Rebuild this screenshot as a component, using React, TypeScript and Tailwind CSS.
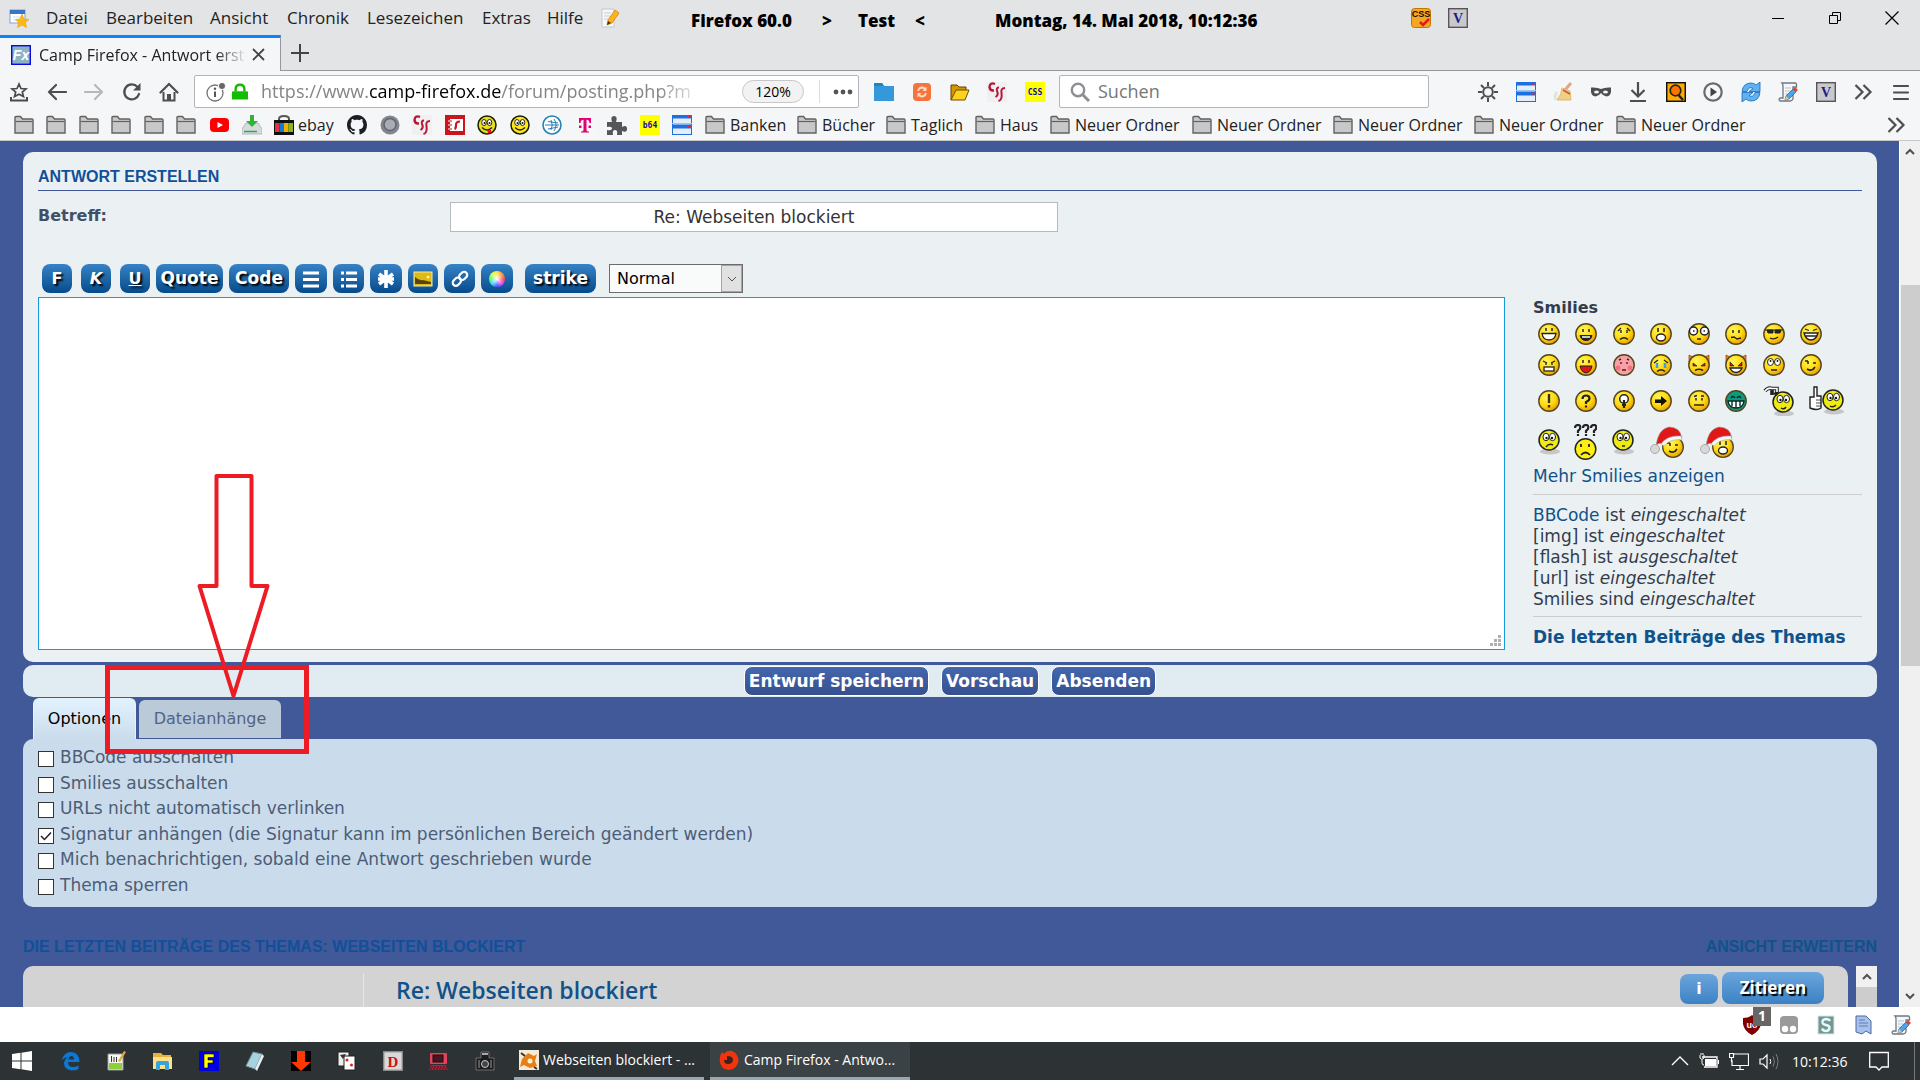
import React, { useState } from 'react'
import clsx from 'clsx'

const ui = "font-['Open_Sans','Noto_Sans',sans-serif]"
const verdana = "font-['DejaVu_Sans',sans-serif]"
const arial = "font-['Liberation_Sans',sans-serif]"

type IconProps = { className?: string }

const Svg = ({ className = 'size-5', box = 20, children }: { className?: string; box?: number; children: React.ReactNode }) => (
  <svg viewBox={`0 0 ${box} ${box}`} className={clsx('shrink-0', className)} fill="none" aria-hidden="true">
    {children}
  </svg>
)

/* ---------- browser icons ---------- */

const FolderIcon = () => (
  <Svg>
    <path d="M1 18V2.500Q1 1.500 2 1.500H6.500L8.500 4H18Q19 4 19 5V18Z" fill="#c8c8c8" stroke="#626262" strokeWidth="1.400" />
    <path d="M1.500 6.500H18.500" stroke="#626262" strokeWidth="1.200" />
  </Svg>
)

const WindowStarIcon = () => (
  <Svg>
    <rect x="1" y="2" width="15" height="13" fill="#fff" stroke="#7ba3d8" />
    <rect x="1" y="2" width="15" height="4" fill="#3b73c8" />
    <path d="M4 9H13M4 12H11" stroke="#cfe0f5" />
    <path d="M13 6L15 11L20 11.500L16.300 14.500L17.500 19.500L13 17L8.500 19.500L9.700 14.500L6.500 11.500L11 11Z" fill="#fdb913" stroke="#f0a000" strokeWidth=".6" />
  </Svg>
)

const NotePencilIcon = () => (
  <Svg>
    <path d="M2 1H14V19H2Z" fill="#f6f8fb" stroke="#c0c7d0" />
    <path d="M4 5H11M4 8H10M4 11H8" stroke="#c3ccd8" />
    <path d="M7 17L8 12L15 2L19 5L12 15Z" fill="#ffb31a" stroke="#d68500" strokeWidth=".8" />
    <path d="M7 17L8 13L11 15Z" fill="#333" />
  </Svg>
)

const ScriptIcon = () => (
  <Svg>
    <path d="M4 1H17Q19 1 18.500 5H15V17Q14 19 12 19H2Q0 17 2 16H5V4Q5 2 4 1Z" fill="#f4f7fa" stroke="#6d7884" strokeWidth="1.300" />
    <path d="M7 6H13M7 9H13M7 12H11" stroke="#b7c2cd" />
    <path d="M7 18L8 14L15 7L18 10L11 17Z" fill="#4ba3ee" stroke="#1c5fa8" strokeWidth=".7" />
    <path d="M15 7L17 5L20 8L18 10Z" fill="#e8402a" />
    <path d="M7 18L8 14L11 17Z" fill="#f7c56f" />
  </Svg>
)

const VIcon = () => (
  <Svg>
    <rect x=".7" y=".7" width="18.600" height="18.600" fill="#c9c9cd" stroke="#55555b" strokeWidth="1.400" />
    <text x="10" y="15" textAnchor="middle" fontSize="14" fontWeight="700" fontFamily="Liberation Serif, serif" fill="#1b1b86">V</text>
  </Svg>
)

const CssCheckIcon = () => (
  <Svg>
    <rect x=".5" y=".5" width="19" height="19" rx="3" fill="#f5a623" stroke="#c47400" />
    <text x="10" y="9" textAnchor="middle" fontSize="9" fontWeight="700" fontFamily="Liberation Sans, sans-serif" fill="#111">CSS</text>
    <path d="M9 14L12 17L18 11" stroke="#e01b1b" strokeWidth="2.500" />
  </Svg>
)

const WindowsListIcon = () => (
  <Svg>
    <rect x=".5" y=".5" width="19" height="19" fill="#e4eefb" stroke="#1e6fe0" />
    <rect width="20" height="3.500" fill="#1e6fe0" />
    <rect y="9.500" width="20" height="4" fill="#1e6fe0" />
    <path d="M0 8.500H20" stroke="#9cc4f5" />
    <path d="M15.500 1.800H18.500M15.500 11.500H18.500" stroke="#e8281e" strokeWidth="1.800" />
  </Svg>
)

const CssScriptIcon = () => (
  <Svg>
    <rect width="20" height="20" fill="#f1eff0" />
    <path d="M8 2Q3 0 2.500 5Q3 9 7 8.500" stroke="#b3173a" strokeWidth="2.400" />
    <path d="M12 5.500Q9 5.500 10 9Q12 13 8.500 15M18 6Q13.500 6 14.500 11Q15.500 18 11.500 19" stroke="#b3173a" strokeWidth="2" />
  </Svg>
)

const YellowLabel = ({ text }: { text: string }) => (
  <Svg>
    <rect width="20" height="20" fill="#ff0" />
    <text x="10" y="13" textAnchor="middle" fontSize="8" fontWeight="700" fontFamily="DejaVu Sans Mono, monospace" fill="#0b0bb0">{text}</text>
  </Svg>
)

const StarTrayIcon = () => (
  <Svg>
    <path d="M10 2L12 6.500L17 7L13.300 10L14.500 14.500L10 12.200L5.500 14.500L6.700 10L3 7L8 6.500Z" stroke="#4a4a4f" strokeWidth="1.700" />
    <path d="M2 15V18.500H18V15" stroke="#4a4a4f" strokeWidth="2" />
  </Svg>
)

const ArrowLeftIcon = () => (
  <Svg><path d="M19 10H2M9 3L2 10L9 17" stroke="#4d4d52" strokeWidth="2.200" strokeLinecap="round" strokeLinejoin="round" /></Svg>
)
const ArrowRightIcon = () => (
  <Svg><path d="M1 10H18M11 3L18 10L11 17" stroke="#b8b8bb" strokeWidth="2.200" strokeLinecap="round" strokeLinejoin="round" /></Svg>
)
const ReloadIcon = () => (
  <Svg>
    <path d="M17 12A7.500 7.500 0 1 1 15.500 5" stroke="#4d4d52" strokeWidth="2.300" strokeLinecap="round" />
    <path d="M18.500 1V8.500H11Z" fill="#4d4d52" />
  </Svg>
)
const HomeIcon = () => (
  <Svg>
    <path d="M1.500 10.500L10 2L18.500 10.500" stroke="#4d4d52" strokeWidth="2.200" strokeLinecap="round" />
    <path d="M4.500 10V18.500H15.500V10" stroke="#4d4d52" strokeWidth="2" />
    <path d="M8 12H12V19H8Z" fill="#4d4d52" />
  </Svg>
)
const InfoIcon = () => (
  <Svg>
    <circle cx="9" cy="11" r="8" stroke="#737378" strokeWidth="1.300" />
    <path d="M9 9.500V15" stroke="#55555a" strokeWidth="2" />
    <circle cx="9" cy="6.800" r="1.200" fill="#55555a" />
    <circle cx="16" cy="4" r="3.600" fill="#66666b" stroke="#fff" />
  </Svg>
)
const LockIcon = () => (
  <Svg className="h-5 w-4">
    <path d="M4.500 9V6.500Q4.500 1 10 1Q15.500 1 15.500 6.500V9" stroke="#12bc00" strokeWidth="3" />
    <rect x="0" y="9" width="20" height="10.500" rx="1.200" fill="#12bc00" />
  </Svg>
)
const SearchIcon = () => (
  <Svg>
    <circle cx="8" cy="8" r="6.200" stroke="#8f8f93" strokeWidth="2.400" />
    <path d="M12.500 12.500L19 19" stroke="#8f8f93" strokeWidth="3" />
  </Svg>
)
const GearIcon = () => (
  <Svg>
    <circle cx="10" cy="10" r="4.800" stroke="#4d4d52" strokeWidth="2" />
    <path d="M10 0V4M10 16V20M0 10H4M16 10H20M3 3L6 6M14 14L17 17M17 3L14 6M6 14L3 17" stroke="#4d4d52" strokeWidth="2" />
  </Svg>
)
const BroomIcon = () => (
  <Svg>
    <path d="M12 8L18 1" stroke="#e0a888" strokeWidth="3" />
    <path d="M9 6L17 9L18 18L4 18Q9 12 9 6Z" fill="#f1cf85" stroke="#dcae5c" strokeWidth=".8" />
    <path d="M10 8L17 12" stroke="#d34f3e" strokeWidth="1.600" />
    <path d="M4 10Q1 14 3 18" stroke="#dde8dc" strokeWidth="3" />
  </Svg>
)
const MaskIcon = () => (
  <Svg>
    <path d="M0 5.500Q6 5 10 7Q14 5 20 5.500Q21 14 15.500 14.500Q12 14 10 11Q8 14 4.500 14.500Q-1 14 0 5.500Z" fill="#4d4d52" />
    <ellipse cx="5.500" cy="10" rx="2.500" ry="1.500" fill="#f5f6f7" />
    <ellipse cx="14.500" cy="10" rx="2.500" ry="1.500" fill="#f5f6f7" />
  </Svg>
)
const DownloadIcon = () => (
  <Svg><path d="M10 0V14M3.500 8L10 14.500L16.500 8M2 19H18" stroke="#4d4d52" strokeWidth="2.200" /></Svg>
)
const OrangeSearchIcon = () => (
  <Svg>
    <rect x=".7" y=".7" width="18.600" height="18.600" fill="#ffab00" stroke="#111" strokeWidth="1.500" />
    <circle cx="9.500" cy="8.500" r="5.300" fill="#ff7300" stroke="#222" strokeWidth="1.700" />
    <path d="M12.500 13L17 18" stroke="#222" strokeWidth="2.500" />
  </Svg>
)
const PlayIcon = () => (
  <Svg>
    <circle cx="10" cy="10" r="8.700" fill="#f7f7f7" stroke="#6b6b70" strokeWidth="2.200" />
    <path d="M7.500 5.500L14 10L7.500 14.500Z" fill="#444" />
  </Svg>
)
const SyncBlueIcon = () => (
  <Svg>
    <path d="M1 9.500Q2 1 10 1Q13 1 15 3L19 0V9.500H8L12 6.500Q8 4 6 9.500Z" fill="#5eb1f2" stroke="#1667b5" strokeWidth=".8" />
    <path d="M19 10.500Q18 19 10 19Q7 19 5 17L1 20V10.500H12L8 13.500Q12 16 14 10.500Z" fill="#5eb1f2" stroke="#1667b5" strokeWidth=".8" />
  </Svg>
)
const ChevronsIcon = () => (
  <Svg><path d="M2.500 3L9.500 10L2.500 17M10.500 3L17.500 10L10.500 17" stroke="#4d4d52" strokeWidth="2.200" /></Svg>
)
const BurgerIcon = () => (
  <Svg><path d="M3 4H17M3 10.500H17M3 17H17" stroke="#4d4d52" strokeWidth="2.200" strokeLinecap="round" /></Svg>
)
const BlueFolderIcon = () => (
  <Svg><path d="M0 2Q0 1 1 1H8L10 4H20V19H0Z" fill="#3598db" /><path d="M0 2Q0 1 1 1H8L10 4H0Z" fill="#2c80b9" /></Svg>
)
const OrangeReloadIcon = () => (
  <Svg>
    <rect x="1" y="1" width="18" height="18" rx="4" fill="#f4743b" />
    <path d="M6 9Q7 5.500 10.500 5.500L13.500 7M14 11Q13 14.500 9.500 14.500L6.500 13" stroke="#ffd9c4" strokeWidth="2" />
    <path d="M14.500 4.500V9H10.500ZM5.500 15.500V11H9.500Z" fill="#ffd9c4" />
  </Svg>
)
const OpenFolderIcon = () => (
  <Svg>
    <path d="M1 18V3H7L9 5H16V9" fill="#d99400" stroke="#5c4400" />
    <path d="M1 18L6 8H19L15 18Z" fill="#ffd21f" stroke="#6b4e00" />
  </Svg>
)
const YoutubeIcon = () => (
  <Svg><rect x="0" y="3" width="19" height="14" rx="4" fill="#f00" /><path d="M7.500 7V13L13 10Z" fill="#fff" /></Svg>
)
const SaveDiskIcon = () => (
  <Svg>
    <path d="M4 8H16L20 14V19H0V14Z" fill="#d7dbe0" stroke="#a5abb3" strokeWidth=".8" />
    <path d="M2 16.500H15" stroke="#2fa84a" strokeWidth="1.500" />
    <path d="M8 0H12V6H16L10 12L4 6H8Z" fill="#33b23a" />
  </Svg>
)
const BagIcon = () => (
  <Svg>
    <path d="M5 7V4Q5 1 10 1Q15 1 15 4V7" stroke="#555" strokeWidth="2" />
    <rect y="5" width="20" height="15" fill="#111" />
    <rect x="1" y="8" width="4.500" height="9" fill="#e53238" />
    <rect x="5.500" y="8" width="4.500" height="9" fill="#0a7de0" />
    <rect x="10" y="8" width="4.500" height="9" fill="#f5af02" />
    <rect x="14.500" y="8" width="4.500" height="9" fill="#86b817" />
  </Svg>
)
const GithubIcon = () => (
  <Svg box={16}>
    <path fill="#1b1f23" d="M8 0C3.580 0 0 3.580 0 8c0 3.540 2.290 6.530 5.470 7.590.4.070.55-.17.55-.38 0-.19-.01-.82-.01-1.490-2.010.37-2.530-.49-2.690-.94-.09-.23-.48-.94-.82-1.130-.28-.15-.68-.52-.01-.53.63-.01 1.080.58 1.230.82.72 1.210 1.870.87 2.330.66.070-.52.28-.87.51-1.070-1.780-.2-3.640-.89-3.640-3.950 0-.87.31-1.590.82-2.150-.08-.2-.36-1.020.08-2.120 0 0 .67-.21 2.200.82.64-.18 1.320-.27 2-.27s1.360.09 2 .27c1.530-1.040 2.200-.82 2.200-.82.44 1.100.16 1.920.08 2.120.51.56.82 1.270.82 2.150 0 3.070-1.870 3.750-3.650 3.950.29.25.54.73.54 1.480 0 1.070-.01 1.930-.01 2.200 0 .21.15.46.55.38A8.010 8.010 0 0 0 16 8c0-4.420-3.580-8-8-8z" />
  </Svg>
)
const RingIcon = () => (
  <Svg>
    <circle cx="10" cy="10" r="9.500" fill="#84868f" />
    <circle cx="10" cy="9.500" r="6" fill="#a9acb5" stroke="#62646d" strokeWidth="1.500" />
  </Svg>
)
const PhoneBookIcon = () => (
  <Svg>
    <rect width="20" height="20" fill="#c9151b" />
    <path d="M5 4H18V16H5Z" fill="#fff" />
    <path d="M2.500 6H6.500M2.500 10H6.500M2.500 14H6.500" stroke="#c9151b" strokeWidth="2" />
    <path d="M3 6H6M3 10H6M3 14H6" stroke="#fff" />
    <path d="M15 6.500Q11 6.500 11 10Q11 13.500 9.500 14" stroke="#c9151b" strokeWidth="2.200" />
  </Svg>
)
const GlobeIcon = () => (
  <Svg>
    <circle cx="10" cy="10" r="9" fill="#fff" stroke="#2580b3" strokeWidth="1.600" />
    <path d="M3 10H17M6 6.500L16 8M6 14L16 12M12 4Q16 10 12 16M9 5Q11.500 10 9 15" stroke="#2580b3" />
  </Svg>
)
const TelekomIcon = () => (
  <Svg>
    <rect width="20" height="20" fill="#f7f7f7" />
    <path d="M4 3H16V8H14.500Q14.500 5 11.500 4.700V15Q11.500 16.500 14 16.500V17.500H6V16.500Q8.500 16.500 8.500 15V4.700Q5.500 5 5.500 8H4Z" fill="#e20074" />
    <path d="M4 10.500H6.500V13H4ZM13.500 10.500H16V13H13.500Z" fill="#e20074" />
  </Svg>
)
const PuzzleIcon = () => (
  <Svg><path d="M0 7H5Q3 1 7 1Q11 1 9 7H15V12Q20 9 20 14Q20 18 15 16V20H10Q11 15 8 15Q5 15 6 20H0V15Q5 16 5 13Q4 11 0 12Z" fill="#55555a" /></Svg>
)
const GreenBall = ({ tongue }: { tongue?: boolean }) => (
  <Svg>
    <circle cx="10" cy="10" r="9" fill={tongue ? '#e8e019' : '#ffe81a'} stroke="#1c1c00" strokeWidth="1.500" />
    <ellipse cx="7" cy="7.500" rx="2.300" ry="3" fill="#fff" stroke="#222" />
    <ellipse cx="12.500" cy="7.500" rx="2.300" ry="3" fill="#fff" stroke="#222" />
    <circle cx="7.500" cy="8" r="1" fill="#111" />
    <circle cx="12.500" cy="8" r="1" fill="#111" />
    <path d="M5 12.500Q10 17.500 15 12.500" stroke="#222" strokeWidth="1.300" />
    {tongue && <path d="M10 15H14V18H11Z" fill="#e01818" />}
  </Svg>
)

/* ---------- smilies ---------- */

const faces: Record<string, React.ReactNode> = {
  biggrin: <><path d="M4 10.500H18Q17 17 11 17Q5 17 4 10.500Z" fill="#fff" stroke="#222" strokeWidth="1.300" /><path d="M8 5V8M14 5V8" stroke="#222" strokeWidth="1.500" /></>,
  smile: <><path d="M5 12.500H17Q16 17.500 11 17.500Q6 17.500 5 12.500Z" fill="#222" stroke="#222" /><path d="M7 14H15" stroke="#fff" strokeWidth="1.500" /><path d="M8 6V9M14 6V9" stroke="#222" strokeWidth="1.500" /></>,
  sad: <><path d="M7 16.500Q11 13 15 16.500" stroke="#222" strokeWidth="1.500" /><path d="M8 7V10M14 7V10M5 8L8 5M17 8L14 5" stroke="#222" strokeWidth="1.400" /></>,
  surprised: <><ellipse cx="11" cy="14.500" rx="4.500" ry="3.500" fill="#fff" stroke="#222" strokeWidth="1.400" /><path d="M8 5V9M14 5V9" stroke="#222" strokeWidth="1.500" /></>,
  eek: <><circle cx="5.500" cy="8" r="4" fill="#fff" stroke="#222" strokeWidth="1.500" /><circle cx="16.500" cy="8" r="4" fill="#fff" stroke="#222" strokeWidth="1.500" /><path d="M5 8H6.500M15.500 8H17M9 16H13" stroke="#222" strokeWidth="1.500" /></>,
  confused: <><path d="M6 14.500L9 14L12 16L16 15" stroke="#222" strokeWidth="1.500" /><path d="M8 7V10M14 7V10" stroke="#222" strokeWidth="1.500" /></>,
  cool: <><path d="M2 7H20M4 7H10V10H5ZM12 7H18L17 10H12Z" fill="#222" stroke="#222" /><path d="M7 15Q11 17 15 14" stroke="#222" strokeWidth="1.300" /></>,
  lol: <><path d="M4 10H18Q16 17 11 17Q6 17 4 10Z" fill="#fff" stroke="#222" strokeWidth="1.400" /><path d="M5 13H17M5 6L9 7.500M17 6L13 7.500" stroke="#222" strokeWidth="1.300" /></>,
  mad: <><rect x="6" y="13" width="10" height="4" fill="#fff" stroke="#222" strokeWidth="1.300" /><path d="M5 7L9 9M17 7L13 9M8 9V11M14 9V11" stroke="#222" strokeWidth="1.300" /></>,
  razz: <><path d="M5 12H17Q16 18 11 19Q6 18 5 12Z" fill="#e01414" stroke="#222" /><path d="M8 6V9M14 6V9" stroke="#222" strokeWidth="1.500" /></>,
  redface: <><circle cx="5" cy="14" r="2.500" fill="#f07480" /><circle cx="17" cy="14" r="2.500" fill="#f07480" /><path d="M9 16H13M8 8V10M14 8V10M6 6L8 5M16 6L14 5" stroke="#4a2020" strokeWidth="1.400" /></>,
  cry: <><path d="M7 9V14M15 9V14" stroke="#3c9dea" strokeWidth="2.500" /><path d="M7 17.500Q11 14 15 17.500" stroke="#222" strokeWidth="1.500" /><path d="M4 9L8 6M18 9L14 6" stroke="#222" strokeWidth="1.300" /></>,
  evil: <><path d="M7 16.500Q11 14 15 16.500" stroke="#222" strokeWidth="1.500" /><path d="M5 9L9 12L5 12ZM17 9L13 12L17 12Z" fill="#e01010" stroke="#222" strokeWidth=".7" /></>,
  twisted: <><path d="M5 14H17Q15 18.500 11 18.500Q7 18.500 5 14Z" fill="#fff" stroke="#222" strokeWidth="1.300" /><path d="M5 8L9 12L5 12ZM17 8L13 12L17 12Z" fill="#e01010" stroke="#222" strokeWidth=".7" /></>,
  rolleyes: <><ellipse cx="7.500" cy="8" rx="3" ry="3.500" fill="#fff" stroke="#222" /><ellipse cx="14.500" cy="8" rx="3" ry="3.500" fill="#fff" stroke="#222" /><path d="M7.500 6V8M14.500 6V8M8 16H14" stroke="#222" strokeWidth="1.500" /></>,
  wink: <><path d="M7 15Q12 18 15 13M5 7H8M13 9H16" stroke="#222" strokeWidth="1.500" /><path d="M8 7V10" stroke="#222" strokeWidth="1.500" /></>,
  exclaim: <path d="M11 4V13M11 15V17.500" stroke="#3c3200" strokeWidth="2.400" />,
  question: <path d="M7.500 9Q7.500 5.500 11 5.500Q14.500 5.500 14.500 8.500Q14.500 10.500 11 12V14M11 15.500V17.500" stroke="#222" strokeWidth="2.200" />,
  idea: <><circle cx="11" cy="9" r="4.300" fill="#fff" stroke="#222" strokeWidth="1.500" /><path d="M11 10V18M9 15H13" stroke="#222" strokeWidth="2.200" /></>,
  arrow: <path d="M5 9.500H11V6L17 11L11 16V13H5Z" fill="#111" />,
  neutral: <><path d="M6 15H16M8 8V10.500M14 8V10.500M6 6.500L9 5.500M13 6H16" stroke="#222" strokeWidth="1.500" /></>,
  mrgreen: <><path d="M3 11H19Q18 18 11 18Q4 18 3 11Z" fill="#fff" stroke="#062c22" strokeWidth="1.400" /><path d="M7 11V16M11 11V18M15 11V16M6 8Q8 5 10 8M12 8Q14 5 16 8" stroke="#062c22" strokeWidth="1.400" /></>
}

const Smiley = ({ kind, className = 'size-[22px]' }: { kind: string } & IconProps) => {
  const horned = kind === 'evil' || kind === 'twisted'
  const fill = kind === 'mrgreen' ? '#0f9a80' : kind === 'redface' ? '#f8a0a6' : 'url(#smiley)'
  return (
    <Svg box={22} className={className}>
      {horned && <path d="M1 8V1L7 4ZM21 8V1L15 4Z" fill="#f08020" stroke="#8a4200" strokeWidth=".7" />}
      <circle cx="11" cy="11" r="10.200" fill={fill} stroke="#54451c" strokeWidth="1.400" />
      {faces[kind]}
    </Svg>
  )
}

const LimeFace = ({ x = 11, y = 11, mouth = 'M-3 6Q0 8 3 5' }: { x?: number; y?: number; mouth?: string }) => (
  <g transform={`translate(${x} ${y})`}>
    <ellipse cx="1" cy="11.500" rx="10" ry="3" fill="#c4c6c8" />
    <circle r="10" fill="#efea10" stroke="#222" strokeWidth="1.500" />
    <ellipse cx="-3" cy="-3" rx="3" ry="3.700" fill="#fff" stroke="#222" />
    <ellipse cx="3.500" cy="-3" rx="3" ry="3.700" fill="#fff" stroke="#222" />
    <circle cx="-2.500" cy="-2" r="1.200" fill="#111" />
    <circle cx="3" cy="-2" r="1.200" fill="#111" />
    <path d={mouth} stroke="#222" strokeWidth="1.500" fill="none" />
  </g>
)

const SantaSmiley = ({ kind }: { kind: string }) => (
  <svg viewBox="0 0 34 32" className="h-8 w-[34px] shrink-0" fill="none" aria-hidden="true">
    <g transform="translate(12 10)">
      <circle cx="11" cy="11" r="10.300" fill="url(#smiley)" stroke="#54451c" strokeWidth="1.300" />
      {faces[kind]}
    </g>
    <path d="M6 20Q8 3 19 1Q30 1 32 12Q21 11 13 18Q8 16 6 20Z" fill="#e01818" stroke="#9b9b9b" strokeWidth=".6" />
    <path d="M11 18Q17 9 31 10L32 14Q21 12 14 20Z" fill="#f5f5f5" stroke="#b0b0b0" strokeWidth=".6" />
    <circle cx="5" cy="23" r="4.500" fill="#d8d8d8" stroke="#aaa" />
  </svg>
)

const smileyRows = [
  ['biggrin', 'smile', 'sad', 'surprised', 'eek', 'confused', 'cool', 'lol'],
  ['mad', 'razz', 'redface', 'cry', 'evil', 'twisted', 'rolleyes', 'wink']
]

/* ---------- browser chrome ---------- */

const menus = [
  { label: 'Datei', width: 'w-[60px]' },
  { label: 'Bearbeiten', width: 'w-[104px]' },
  { label: 'Ansicht', width: 'w-[77px]' },
  { label: 'Chronik', width: 'w-[80px]' },
  { label: 'Lesezeichen', width: 'w-[115px]' },
  { label: 'Extras', width: 'w-[65px]' },
  { label: 'Hilfe', width: 'w-[53px]' }
]

const MenuBar = () => (
  <div className="flex h-[35px] items-center pl-[9px] text-[17px] text-[#222]">
    <div className="flex w-[682px] items-center">
      <WindowStarIcon />
      <nav className="ml-[17px] flex">
        {menus.map(m => (
          <button key={m.label} type="button" className={clsx('text-left whitespace-nowrap', m.width)}>{m.label}</button>
        ))}
      </nav>
      <NotePencilIcon />
    </div>
    <div className="flex pt-[7px] text-[17px] leading-6 font-extrabold text-black">
      <span className="w-[131px]">Firefox 60.0</span>
      <span className="w-9">&gt;</span>
      <span className="w-[57px]">Test</span>
      <span className="w-20">&lt;</span>
      <span className="w-[416px] whitespace-nowrap">Montag, 14. Mai 2018, 10:12:36</span>
    </div>
    <div className="flex gap-[17px]"><CssCheckIcon /><VIcon /></div>
    <div className="ml-auto flex items-center gap-[43px] pr-[21px]">
      <button type="button" aria-label="Minimieren"><Svg className="size-[14px]" box={14}><path d="M1 7.500H13" stroke="#000" /></Svg></button>
      <button type="button" aria-label="Wiederherstellen"><Svg className="size-[14px]" box={14}><path d="M4.500 4V1.500H12.500V9.500H10M1.500 4.500H9.500V12.500H1.500Z" stroke="#000" /></Svg></button>
      <button type="button" aria-label="Schließen"><Svg className="size-[14px]" box={14}><path d="M.5.5L13.500 13.500M13.500.5L.5 13.500" stroke="#000" strokeWidth="1.200" /></Svg></button>
    </div>
  </div>
)

const TabStrip = () => (
  <div className="flex h-9 border-b border-[#98989c]">
    <div className="-mb-px flex w-[281px] items-center border-t-[3px] border-r border-t-[#0a84ff] border-r-[#98989c] bg-[#f5f6f7] pl-[11px] text-base">
      <Svg>
        <rect x=".7" y=".7" width="18.600" height="18.600" fill="#8bb3c4" stroke="#0a0ae0" strokeWidth="1.400" />
        <text x="10" y="15" textAnchor="middle" fontSize="14" fontWeight="700" fontStyle="italic" fontFamily="Liberation Sans, sans-serif" fill="#fff">Fx</text>
      </Svg>
      <span className="ml-2 w-[208px] mask-r-from-85% whitespace-nowrap text-[#222]">Camp Firefox - Antwort erst</span>
      <button type="button" aria-label="Tab schließen" className="ml-[5px]">
        <Svg className="size-[13px]" box={13}><path d="M1 1L12 12M12 1L1 12" stroke="#444" strokeWidth="1.800" /></Svg>
      </button>
    </div>
    <button type="button" aria-label="Neuer Tab" className="ml-[10px]">
      <Svg className="size-[18px]" box={18}><path d="M9 0V18M0 9H18" stroke="#444" strokeWidth="2" /></Svg>
    </button>
  </div>
)

const NavBar = () => (
  <div className="flex h-[42px] items-center pr-[9px] pb-px pl-[9px]">
    <div className="flex w-[170px] justify-between">
      {[StarTrayIcon, ArrowLeftIcon, ArrowRightIcon, ReloadIcon, HomeIcon].map((Icon, i) => (
        <button key={i} type="button" className="flex"><Icon /></button>
      ))}
    </div>
    <div className="ml-[15px] flex h-[33px] w-[665px] items-center rounded-xs border border-[#b4b4b8] bg-white pl-[11px]">
      <InfoIcon />
      <span className="ml-[6px] flex"><LockIcon /></span>
      <div className="ml-[13px] w-[442px] mask-r-from-90% text-[18px] whitespace-nowrap text-[#858585]">
        https://www.<span className="text-black">camp-firefox.de</span>/forum/posting.php?m
      </div>
      <button type="button" className="ml-[39px] h-[23px] w-[62px] rounded-full border border-[#c8c8ca] bg-[#f2f2f3] text-[14px] leading-[21px] text-black">120%</button>
      <div className="ml-[15px] h-[23px] w-px bg-[#ddd]" />
      <button type="button" aria-label="Seitenaktionen" className="ml-[13px]">
        <Svg><circle cx="3" cy="10" r="2.400" fill="#555" /><circle cx="10" cy="10" r="2.400" fill="#555" /><circle cx="17" cy="10" r="2.400" fill="#555" /></Svg>
      </button>
    </div>
    <div className="flex w-[200px] justify-between pr-[14px] pl-[15px]">
      <BlueFolderIcon /><OrangeReloadIcon /><OpenFolderIcon /><CssScriptIcon /><YellowLabel text="CSS" />
    </div>
    <div className="flex h-[33px] w-[370px] items-center rounded-xs border border-[#b4b4b8] bg-white pl-[10px]">
      <SearchIcon />
      <input aria-label="Suchen" placeholder="Suchen" className="ml-2 w-full text-[18px] outline-none placeholder:text-[#777]" />
    </div>
    <div className="ml-auto flex w-[433px] justify-between">
      <GearIcon /><WindowsListIcon /><BroomIcon /><MaskIcon /><DownloadIcon /><OrangeSearchIcon />
      <PlayIcon /><SyncBlueIcon /><ScriptIcon /><VIcon /><ChevronsIcon /><BurgerIcon />
    </div>
  </div>
)

const folders = [
  { label: 'Banken', width: 'w-[92px]' },
  { label: 'Bücher', width: 'w-[89px]' },
  { label: 'Taglich', width: 'w-[89px]' },
  { label: 'Haus', width: 'w-[75px]' },
  { label: 'Neuer Ordner', width: 'w-[142px]' },
  { label: 'Neuer Ordner', width: 'w-[141px]' },
  { label: 'Neuer Ordner', width: 'w-[141px]' },
  { label: 'Neuer Ordner', width: 'w-[142px]' },
  { label: 'Neuer Ordner', width: 'w-[141px]' }
]

const BookmarksBar = () => (
  <div className="flex h-7 items-center border-b border-[#c8c8c8] pr-[14px] pb-[3px] pl-[14px] text-base text-[#222]">
    <div className="flex w-[182px] justify-between">
      {Array.from({ length: 6 }, (_, i) => <FolderIcon key={i} />)}
    </div>
    <div className="ml-[14px] flex w-[137px] items-center gap-3">
      <YoutubeIcon /><SaveDiskIcon />
      <a href="#ebay" className="flex items-center gap-1"><BagIcon />ebay</a>
    </div>
    <div className="flex w-[345px] justify-between">
      <GithubIcon /><RingIcon /><CssScriptIcon /><PhoneBookIcon /><GreenBall tongue /><GreenBall />
      <GlobeIcon /><TelekomIcon /><PuzzleIcon /><YellowLabel text="b64" /><WindowsListIcon />
    </div>
    <div className="ml-[13px] flex">
      {folders.map((f, i) => (
        <button key={i} type="button" className={clsx('flex shrink-0 items-center gap-[5px] whitespace-nowrap', f.width)}>
          <FolderIcon />{f.label}
        </button>
      ))}
    </div>
    <span className="ml-auto"><ChevronsIcon /></span>
  </div>
)

/* ---------- editor ---------- */

const bbButton =
  'flex h-[29px] items-center justify-center rounded-lg bg-linear-to-b from-[#3583c6] to-[#054b8c] font-bold text-white [text-shadow:2px_2px_2px_#000]'

const EditorToolbar = () => {
  const [size, setSize] = useState('Normal')
  return (
    <div className="flex h-[29px] items-center gap-[6px] pl-1 text-[17px]">
      <div className="flex gap-[9px]">
        <button type="button" className={clsx(bbButton, 'w-[30px] text-base')}>F</button>
        <button type="button" className={clsx(bbButton, 'w-[30px] text-base italic')}>K</button>
        <button type="button" className={clsx(bbButton, 'w-[30px] text-base underline')}>U</button>
      </div>
      <button type="button" className={clsx(bbButton, 'w-[67px]')}>Quote</button>
      <button type="button" className={clsx(bbButton, 'w-[60px]')}>Code</button>
      <button type="button" aria-label="Liste" className={clsx(bbButton, 'w-8')}>
        <Svg><path d="M2 4H18M2 10.500H18M2 17H18" stroke="#fff" strokeWidth="3" /></Svg>
      </button>
      <button type="button" aria-label="Aufzählung" className={clsx(bbButton, 'w-[31px]')}>
        <Svg><path d="M2 4H5M7 4H18M2 10.500H5M7 10.500H18M2 17H5M7 17H18" stroke="#fff" strokeWidth="3" /></Svg>
      </button>
      <button type="button" aria-label="Listenelement" className={clsx(bbButton, 'w-8')}>
        <Svg><path d="M10 1V19M3 5L17 15M17 5L3 15M2 10H18" stroke="#fff" strokeWidth="3.600" /></Svg>
      </button>
      <button type="button" aria-label="Bild" className={clsx(bbButton, 'w-[30px]')}>
        <Svg>
          <rect x="1" y="3" width="18" height="14" fill="#e0b912" stroke="#f6e9a8" />
          <path d="M2 8Q6 12 10 11L18 13V15H2Z" fill="#5a4310" />
          <circle cx="15" cy="8" r="1.500" fill="#fff3a0" />
        </Svg>
      </button>
      <button type="button" aria-label="Link" className={clsx(bbButton, 'w-[31px]')}>
        <Svg className="size-[18px]">
          <rect x="8.500" y="3" width="10" height="7" rx="3.500" transform="rotate(-45 13.500 6.500)" stroke="#fff" strokeWidth="2.400" />
          <rect x="1.500" y="9.500" width="10" height="7" rx="3.500" transform="rotate(-45 6.500 13)" stroke="#fff" strokeWidth="2.400" />
        </Svg>
      </button>
      <button type="button" aria-label="Schriftfarbe" className={clsx(bbButton, 'w-8')}>
        <span className="size-4 rounded-full bg-[radial-gradient(circle,#fff_0%,transparent_60%),conic-gradient(#ffe24a,#ff9a3c,#ff4a5a,#e44aff,#4a5aff,#4ad8ff,#4aff7a,#d8ff4a,#ffe24a)]" />
      </button>
      <button type="button" className={clsx(bbButton, 'ml-[6px] w-[71px]')}>strike</button>
      <div className="relative ml-[7px] h-[29px] w-[134px]">
        <select
          aria-label="Schriftgröße"
          value={size}
          onChange={e => setSize(e.target.value)}
          className="h-full w-full appearance-none border border-[#6d6d6d] bg-[#f9fafa] pl-[7px] text-base text-black"
        >
          <option>Normal</option>
          <option>Klein</option>
          <option>Groß</option>
        </select>
        <span className="pointer-events-none absolute inset-y-px right-px flex w-[21px] items-center justify-center border border-[#a5a5a5] bg-[#e1e1e1]">
          <Svg className="size-[10px]" box={10}><path d="M1 3L5 7L9 3" stroke="#555" /></Svg>
        </span>
      </div>
    </div>
  )
}

const status = [
  { name: '[img]', state: 'eingeschaltet' },
  { name: '[flash]', state: 'ausgeschaltet' },
  { name: '[url]', state: 'eingeschaltet' }
]

const SmiliesBox = () => (
  <aside className="w-[329px] shrink-0 text-[17px] leading-[21px] text-[#333c4c]">
    <h3 className="text-base leading-[21px] font-bold">Smilies</h3>
    <div className="-ml-[3px]">
      {smileyRows.map((row, i) => (
        <div key={i} className="grid h-[31px] w-[300px] grid-cols-8 place-items-center">
          {row.map(kind => <Smiley key={kind} kind={kind} />)}
        </div>
      ))}
      <div className="flex h-[41px] items-center">
        <div className="grid w-[225px] grid-cols-6 place-items-center">
          {['exclaim', 'question', 'idea', 'arrow', 'neutral', 'mrgreen'].map(kind => <Smiley key={kind} kind={kind} />)}
        </div>
        <svg viewBox="0 0 32 30" className="ml-2 h-[30px] w-8" fill="none" aria-hidden="true">
          <LimeFace x={20} y={16} mouth="M-2 6Q1 8 3 5" />
          <path d="M2 5Q5 1 9 2.500H14V6L12 9M9 4V9" stroke="#222" strokeWidth="3.600" />
          <path d="M2 5Q5 1 9 2.500H14V6" stroke="#fff" strokeWidth="1.600" />
        </svg>
        <svg viewBox="0 0 36 30" className="ml-[14px] h-[30px] w-9" fill="none" aria-hidden="true">
          <LimeFace x={24} y={14} />
          <path d="M5 1H8V10H12V22Q8 25 1 22V11H5Z" fill="#fff" stroke="#222" strokeWidth="1.400" />
          <path d="M7 14H12M7 17H12M7 20H12" stroke="#222" strokeWidth=".8" />
        </svg>
      </div>
      <div className="flex h-[42px] items-center">
        <div className="grid w-[112px] grid-cols-3 place-items-center">
          <svg viewBox="0 0 24 26" className="h-[26px] w-6" fill="none" aria-hidden="true"><LimeFace x={12} mouth="M-3 7Q0 3 4 5" /></svg>
          <svg viewBox="0 0 23 36" className="h-9 w-[23px]" fill="none" aria-hidden="true">
            <circle cx="11.500" cy="25" r="10.300" fill="#ffee10" stroke="#222" strokeWidth="1.400" />
            <path d="M7 20V23M15 20V23M7 31Q11.500 26 16 31" stroke="#222" strokeWidth="1.800" />
            <path d="M1 4Q1 1 4 1Q7 1 6 5L4 7V9M9 4Q9 1 12 1Q15 1 14 5L12 7V9M17 4Q17 1 20 1Q23 1 22 5L20 7V9M4 10V12M12 10V12M20 10V12" stroke="#222" strokeWidth="2.200" />
          </svg>
          <svg viewBox="0 0 24 26" className="h-[26px] w-6" fill="none" aria-hidden="true"><LimeFace x={12} mouth="M-1 6H2" /></svg>
        </div>
        <span className="ml-2"><SantaSmiley kind="wink" /></span>
        <span className="ml-4"><SantaSmiley kind="surprised" /></span>
      </div>
    </div>
    <a href="#smilies" className="mt-[3px] block text-[#105289]">Mehr Smilies anzeigen</a>
    <hr className="mt-[7px] mb-[10px] border-[#ccc]" />
    <p><a href="#bbcode" className="text-[#105289]">BBCode</a> ist <em>eingeschaltet</em></p>
    {status.map(s => <p key={s.name}>{s.name} ist <em>{s.state}</em></p>)}
    <p>Smilies sind <em>eingeschaltet</em></p>
    <hr className="mt-[6px] mb-[10px] border-[#ccc]" />
    <a href="#review" className="font-bold whitespace-nowrap text-[#105289]">Die letzten Beiträge des Themas</a>
  </aside>
)

const EditorPanel = () => (
  <section className="rounded-[10px] bg-[#ebf0f3] px-[15px] pb-3">
    <h2 className={clsx('border-b border-[#415998] pt-[14px] pb-[3px] text-base leading-[21px] font-bold text-[#115098]', arial)}>ANTWORT ERSTELLEN</h2>
    <div className="mt-[11px] flex items-start">
      <label htmlFor="subject" className="w-[412px] pt-[3px] leading-[21px] font-bold text-[#425067]">Betreff:</label>
      <input id="subject" defaultValue="Re: Webseiten blockiert" className="h-[30px] w-[608px] border border-[#b4bac0] bg-white text-center text-[17px] text-[#333]" />
    </div>
    <div className="mt-8"><EditorToolbar /></div>
    <div className="mt-1 flex gap-7">
      <div className="relative flex flex-1">
        <textarea aria-label="Nachricht" className="h-[353px] w-full resize-none border border-[#149ddd] bg-white outline-none" />
        <svg viewBox="0 0 12 12" className="pointer-events-none absolute right-[3px] bottom-[3px] size-3" fill="#b0b0b0" aria-hidden="true">
          <path d="M8 0h3v3h-3zM4 4h3v3h-3zM8 4h3v3h-3zM0 8h3v3h-3zM4 8h3v3h-3zM8 8h3v3h-3z" />
        </svg>
      </div>
      <SmiliesBox />
    </div>
  </section>
)

const SubmitBar = () => (
  <div className="mt-[3px] flex h-8 items-center justify-center gap-3 rounded-[10px] bg-[#e1ebf2]">
    {['Entwurf speichern', 'Vorschau', 'Absenden'].map(label => (
      <button
        key={label}
        type="button"
        className="h-[30px] rounded-lg border border-white bg-linear-to-b from-[#4567ae] to-[#35508f] px-1 text-[17px] leading-7 font-bold whitespace-nowrap text-white"
      >
        {label}
      </button>
    ))}
  </div>
)

const optionLabels = [
  'BBCode ausschalten',
  'Smilies ausschalten',
  'URLs nicht automatisch verlinken',
  'Signatur anhängen (die Signatur kann im persönlichen Bereich geändert werden)',
  'Mich benachrichtigen, sobald eine Antwort geschrieben wurde',
  'Thema sperren'
]

const OptionsPanel = () => {
  const [checked, setChecked] = useState([false, false, false, true, false, false])
  return (
    <>
      <div className="flex h-[42px] items-end gap-[3px] pt-px pl-[10px] text-base">
        <button type="button" className="h-[41px] w-[103px] rounded-t-md border border-b-0 border-[#e6f2fb] bg-linear-to-b from-[#e2f2ff] to-[#cadceb] text-black">Optionen</button>
        <button type="button" className="mb-px h-[38px] w-[142px] rounded-t-md bg-[#bacad9] text-[#536482]">Dateianhänge</button>
      </div>
      <section className="rounded-[10px] bg-[#cadceb] px-[15px] pt-[6px] pb-[9px] text-[17px] text-[#4c5d77]">
        <div className="grid h-[153px] grid-rows-6">
          {optionLabels.map((label, i) => (
            <label key={label} className="flex items-center gap-[6px]">
              <span className="relative mt-[3px] flex">
                <input
                  type="checkbox"
                  checked={checked[i]}
                  onChange={() => setChecked(prev => prev.map((c, j) => (j === i ? !c : c)))}
                  className="size-4 appearance-none border border-[#333] bg-white"
                />
                {checked[i] && (
                  <svg viewBox="0 0 16 16" className="pointer-events-none absolute inset-0 size-4" fill="none" aria-hidden="true">
                    <path d="M3 8L6.500 11.500L13 4.500" stroke="#222" strokeWidth="1.500" />
                  </svg>
                )}
              </span>
              {label}
            </label>
          ))}
        </div>
      </section>
    </>
  )
}

const Review = () => (
  <section>
    <div className={clsx('mt-[29px] flex justify-between text-base leading-[21px] font-bold text-[#115098]', arial)}>
      <h3>DIE LETZTEN BEITRÄGE DES THEMAS: WEBSEITEN BLOCKIERT</h3>
      <a href="#expand" className="text-[#105289]">ANSICHT ERWEITERN</a>
    </div>
    <div className="mt-[9px] flex gap-2">
      <article className="flex h-[100px] flex-1 items-start rounded-[10px] bg-[#d3d3d3] pt-[6px] pr-6">
        <div className="mt-px h-[90px] w-[341px] border-r border-[#e6e6e6]" />
        <h3 className="ml-8 text-[23px] leading-9 font-semibold text-[#105289]">
          <a href="#post" className={ui}>Re: Webseiten blockiert</a>
        </h3>
        <div className="ml-auto flex items-start gap-1 font-bold text-white">
          <button type="button" aria-label="Informationen" className="mt-[2px] h-[30px] w-[38px] rounded-lg bg-linear-to-b from-[#6ba5dc] to-[#3b82c4]">i</button>
          <button type="button" className={clsx('h-8 w-[102px] rounded-lg bg-linear-to-b from-[#6ba5dc] to-[#3b82c4] text-[17px] [text-shadow:2px_2px_1px_#000]', ui)}>Zitieren</button>
        </div>
      </article>
      <div className="h-[100px] w-[21px] bg-[#f0f0f0]">
        <div className="flex h-[21px] items-center justify-center"><Svg className="size-[10px]" box={10}><path d="M1 7L5 3L9 7" stroke="#505050" strokeWidth="2" /></Svg></div>
        <div className="h-20 bg-[#cdcdcd]" />
      </div>
    </div>
  </section>
)

/* red highlight drawn over the attachments tab */
const Annotation = () => (
  <svg className="pointer-events-none absolute top-[333px] left-[105px] h-[280px] w-[205px]" viewBox="0 0 205 280" fill="none" aria-hidden="true">
    <path d="M2.500 193.500H201.500V277.500H2.500Z" stroke="#ed1c24" strokeWidth="5" />
    <path d="M111.500 2V112H94.500L128.500 222L162.500 112H146.500V2Z" stroke="#ed1c24" strokeWidth="4" strokeLinejoin="round" />
  </svg>
)

const PageScrollbar = () => (
  <div className="flex w-[21px] shrink-0 flex-col items-center border-l border-white bg-[#f0f0f0] pt-[6px] pb-[6px]">
    <Svg className="size-[10px]" box={10}><path d="M1 7L5 3L9 7" stroke="#505050" strokeWidth="2" /></Svg>
    <div className="mt-32 h-[381px] w-[19px] bg-[#cdcdcd]" />
    <span className="mt-auto"><Svg className="size-[10px]" box={10}><path d="M1 3L5 7L9 3" stroke="#505050" strokeWidth="2" /></Svg></span>
  </div>
)

/* ---------- bottom bars ---------- */

const AddonBar = () => (
  <div className="flex h-[35px] shrink-0 items-center justify-end gap-[17px] bg-white pr-[9px]">
    <span className="relative flex">
      <Svg><path d="M9 0Q12 3 18 3V9Q17 16 9 20Q1 16 0 9V3Q6 3 9 0Z" fill="#800000" /><text x="9" y="13" textAnchor="middle" fontSize="9" fontWeight="700" fontFamily="Liberation Sans, sans-serif" fill="#fff">uo</text></Svg>
      <span className="absolute -top-2 left-[10px] h-[19px] w-[18px] bg-[#666] text-center text-[14px] leading-[18px] font-bold text-white">1</span>
    </span>
    <Svg><rect x="0" y="1" width="18" height="18" rx="4" fill="#9a9a9a" /><circle cx="5" cy="14" r="3.200" fill="#fff" /><circle cx="13" cy="14" r="3.200" fill="#fff" /></Svg>
    <Svg>
      <rect x="1" y="1" width="16" height="18" fill="#7d938f" stroke="#c9eeee" />
      <path d="M13 6Q12 4 9 4Q5 4.500 5.500 7.500Q6 9.500 9 10Q13 11 12.500 13Q12 16 9 16Q6 16 5 13.500" stroke="#dff" strokeWidth="2.400" />
    </Svg>
    <Svg><path d="M2 1H12L17 6V19L12 16L8 19L2 17Z" fill="#a9c0e8" stroke="#4b69a8" /><path d="M5 5H11M5 8H14M5 11H14" stroke="#5a7bbb" /></Svg>
    <ScriptIcon />
  </div>
)

const PinnedApps = () => (
  <div className="flex w-[502px] items-center gap-[26px]">
    <Svg><path d="M0 3L8.500 1.800V9.500H0ZM9.500 1.700L20 0V9.500H9.500ZM0 10.500H8.500V18.200L0 17ZM9.500 10.500H20V20L9.500 18.300Z" fill="#fff" /></Svg>
    <Svg className="ml-[3px] size-5"><path d="M1 9Q3 1 10 1Q18 1 18.500 11H7Q7 16 12 16Q15 16 17.500 14.500V18Q15 19.500 11 19.500Q3 19 3 12Q4 7 8 6Q4 6 1 9ZM7.500 8.500H13Q13 5 10.500 5Q8 5 7.500 8.500Z" fill="#0a78d7" fillRule="evenodd" /></Svg>
    <Svg>
      <path d="M1 3H16V19H1Z" fill="#f4f8ef" stroke="#999" /><path d="M2 12H15V18H2Z" fill="#8fcf3c" />
      <path d="M4.500 5V11M7 6V11M9.500 6V11" stroke="#333" /><path d="M11 10L17 0L19 1L13 11Z" fill="#e2a83a" />
    </Svg>
    <Svg><path d="M0 2H8L10 4H18V8H0Z" fill="#e8b23c" /><path d="M0 6H19V18H0Z" fill="#ffe08a" /><path d="M3 19V12Q3 10 5 10H14Q16 10 16 12V19H12V14H7V19Z" fill="#35a5e0" /></Svg>
    <Svg><rect width="20" height="20" fill="#0000e6" /><path d="M5 3H15V6.500H9V9H14V12H9V17H5Z" fill="#ff0" stroke="#000" strokeWidth=".6" /></Svg>
    <Svg><path d="M8 1L17 3L10 18L1 15Z" fill="#a6d3df" stroke="#6f8f99" /><path d="M17 3L19 5L12 20L10 18Z" fill="#e6eef0" /></Svg>
    <Svg><rect width="20" height="20" fill="#000" /><path d="M6 0H14V11H20L10 20L0 11H6Z" fill="#ff3700" /></Svg>
    <Svg><rect x="1" y="1" width="11" height="14" fill="#eee" stroke="#222" /><rect x="7" y="5" width="11" height="14" fill="#fff" stroke="#222" /><circle cx="10" cy="9" r="1.500" fill="#e02020" /><circle cx="14.500" cy="14" r="1.500" fill="#e02020" /><path d="M3 4L9 3L6 8Z" fill="#333" /></Svg>
    <Svg><rect x=".7" y=".7" width="18.600" height="18.600" fill="#d9d9d9" stroke="#8a8a8a" strokeWidth="1.400" /><text x="10" y="15.500" textAnchor="middle" fontSize="15" fontWeight="700" fontFamily="Liberation Serif, serif" fill="#d01010">D</text></Svg>
    <Svg><rect x="1" y="2" width="17" height="11" rx="1" fill="#e2435b" /><rect x="4" y="4" width="10" height="7" fill="#4a1520" stroke="#111" /><path d="M2 14H17L19 19H0Z" fill="#b01f38" /><path d="M2 16H18M1 18H19" stroke="#4a1520" strokeDasharray="2 1" /></Svg>
    <Svg><path d="M6 7V1H14V7H19V19H1V7Z" fill="#1c1c1c" stroke="#8a8a8a" strokeWidth=".7" /><circle cx="10" cy="13" r="3.500" fill="#444" stroke="#ccc" /><path d="M7 2H13V4H7Z" fill="#aaa" /><path d="M4 9V17M16 9V17" stroke="#999" /></Svg>
  </div>
)

const Taskbar = () => (
  <footer className={clsx('flex h-[38px] shrink-0 items-stretch bg-[#2d3235] pl-3 text-[14px] text-white', ui)}>
    <PinnedApps />
    <button type="button" className="flex w-[190px] items-center gap-1 border-b-[3px] border-[#97a8b2] pl-[5px] whitespace-nowrap">
      <Svg><rect width="20" height="20" fill="#f5ead6" /><path d="M3 9L9 3L15 6L18 4L16 11L18 16L11 18L5 15L1 17Z" fill="#e87e16" /><circle cx="11" cy="11" r="2.500" fill="#fff0d0" /><path d="M2 3L6 6M15 17L18 19" stroke="#333" strokeWidth="2" /></Svg>
      Webseiten blockiert - ...
    </button>
    <button type="button" className="ml-[6px] flex w-[200px] items-center gap-[5px] border-b-[3px] border-[#97a8b2] bg-[#3b4245] pl-[9px] whitespace-nowrap">
      <Svg><path d="M3 2L5 4Q8 0 13 1Q20 4 19.500 12Q17 19.500 10 20Q2 19.500 1 12Q0 7 3 2Z" fill="#f0350d" /><path d="M8 6Q13 6 14 9Q14 14 9 14Q5 14 5 10L8 10Z" fill="#3b2220" /></Svg>
      Camp Firefox - Antwo...
    </button>
    <div className="ml-auto flex items-center pr-[5px]">
      <Svg className="size-[18px]" box={18}><path d="M1 13L9 5L17 13" stroke="#fff" strokeWidth="1.400" /></Svg>
      <Svg className="ml-[10px] size-5"><path d="M3 6H18V16H5" stroke="#fff" strokeWidth="1.300" /><path d="M6 8H17V15H6ZM19 9H20V13H19Z" fill="#fff" /><path d="M1 4V7Q3 10 5 7V4M3 9V12Q3 14 5 14M2 2V4M4 2V4" stroke="#fff" /></Svg>
      <Svg className="ml-[10px] size-5"><path d="M5 3H19.500V14.500H3V9M11 15V18M7 18.500H15M.5 2.500H4.500V6.500H.5ZM2.500 6.500V11" stroke="#fff" strokeWidth="1.200" /></Svg>
      <Svg className="ml-[10px] size-5"><path d="M1 8V13H4L8 17V4L4 8Z" stroke="#fff" strokeWidth="1.200" /><path d="M11 8Q12.500 10.500 11 13" stroke="#fff" /><path d="M14 5.500Q17 10.500 14 15.500M17 3Q21 10.500 17 18" stroke="#7c8083" /></Svg>
      <time className="ml-[13px] w-[77px]">10:12:36</time>
      <Svg><path d="M.7 1.500H19.300V16H13L10 19L7 16H.7Z" stroke="#fff" strokeWidth="1.300" /></Svg>
      <span className="ml-[25px] h-[38px] w-px bg-[#777]" />
    </div>
  </footer>
)

export default function App() {
  return (
    <div className={clsx('flex h-screen flex-col overflow-hidden bg-[#e3e4e6]', ui)}>
      <svg className="absolute size-0" aria-hidden="true">
        <defs>
          <radialGradient id="smiley" cx=".38" cy=".32" r=".75">
            <stop offset="0" stopColor="#fff75e" />
            <stop offset=".55" stopColor="#ffd90f" />
            <stop offset="1" stopColor="#e59400" />
          </radialGradient>
        </defs>
      </svg>
      <header className="shrink-0">
        <MenuBar />
        <TabStrip />
        <div className="bg-[#f5f6f7]">
          <NavBar />
          <BookmarksBar />
        </div>
      </header>
      <div className="flex min-h-0 flex-1 bg-[#415998]">
        <main className={clsx('relative flex-1 overflow-hidden pt-[11px] pr-[22px] pl-[23px] text-base', verdana)}>
          <EditorPanel />
          <SubmitBar />
          <OptionsPanel />
          <Review />
          <Annotation />
        </main>
        <PageScrollbar />
      </div>
      <AddonBar />
      <Taskbar />
    </div>
  )
}
